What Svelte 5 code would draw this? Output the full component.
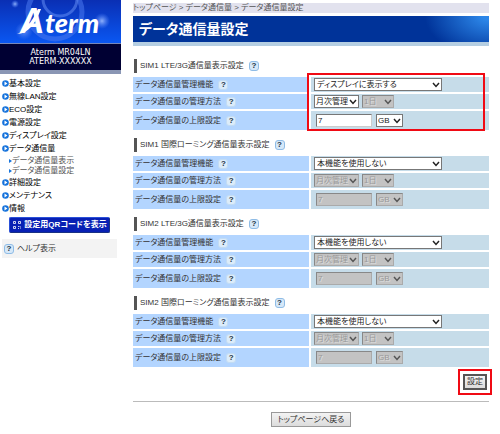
<script>
    const menu = [
        { label: '基本設定' },
        { label: '無線LAN設定' },
        { label: 'ECO設定' },
        { label: '電源設定' },
        { label: 'ディスプレイ設定' },
        { label: 'データ通信量', children: ['データ通信量表示', 'データ通信量設定'] },
        { label: '詳細設定' },
        { label: 'メンテナンス' },
        { label: '情報' }
    ];

    const modes = ['本機能を使用しない', 'ディスプレイに表示する'];

    let sections = [
        { id: 'sim1', title: 'SIM1 LTE/3G通信量表示設定', mode: modes[1], limit: '7' },
        { id: 'sim1r', title: 'SIM1 国際ローミング通信量表示設定', mode: modes[0], limit: '7' },
        { id: 'sim2', title: 'SIM2 LTE/3G通信量表示設定', mode: modes[0], limit: '7' },
        { id: 'sim2r', title: 'SIM2 国際ローミング通信量表示設定', mode: modes[0], limit: '7' }
    ];
</script>

{#snippet arrow()}
    <svg class="arrow" viewBox="0 0 8 6" aria-hidden="true"><path d="M1 1 L4 4.4 L7 1" /></svg>
{/snippet}

<div class="page">
    <aside>
        <div class="logo">
            <svg viewBox="0 0 121 43" preserveAspectRatio="xMidYMid slice" role="img" aria-label="Aterm">
                <defs>
                    <linearGradient id="sky" x1="0" y1="0" x2="0" y2="1">
                        <stop offset="0" stop-color="#0a2fb4" />
                        <stop offset="1" stop-color="#0a57f2" />
                    </linearGradient>
                    <radialGradient id="glow">
                        <stop offset="0" stop-color="#9dbcff" stop-opacity="0.9" />
                        <stop offset="1" stop-color="#5b8cff" stop-opacity="0" />
                    </radialGradient>
                </defs>
                <rect width="121" height="43" fill="url(#sky)" />
                <circle cx="55" cy="12" r="27" fill="none" stroke="#4a78ee" stroke-width="5" opacity="0.55" />
                <circle cx="60" cy="-1" r="17" fill="none" stroke="#5c86ee" stroke-width="3" opacity="0.6" />
                <circle cx="15" cy="4" r="4" fill="url(#glow)" />
                <circle cx="102" cy="21" r="8" fill="url(#glow)" />
                <circle cx="24" cy="31" r="9" fill="url(#glow)" opacity="0.7" />
                <path d="M17 34 C25 32 32 21 38 9 L41 9 C36 23 28 34 17 34 Z" fill="#fff" />
                <text x="21" y="33" class="big">A</text>
                <text x="45" y="33" class="word">term</text>
            </svg>
        </div>
        <div class="model">Aterm MR04LN<br />ATERM-XXXXXX</div>
        <nav>
            <ul>
                {#each menu as item}
                    <li>
                        <a href="#menu">
                            <svg class="bullet" viewBox="0 0 7 7" aria-hidden="true">
                                <circle cx="3.5" cy="3.5" r="3.3" fill="#1673dc" />
                                <path d="M2.5 1.5 L5.4 3.5 L2.5 5.5 Z" fill="#fff" />
                            </svg>{item.label}
                        </a>
                        {#if item.children}
                            <ul class="sub">
                                {#each item.children as child}
                                    <li>
                                        <a href="#sub">
                                            <svg class="tick" viewBox="0 0 3 4" aria-hidden="true"><path d="M0 0 L3 2 L0 4 Z" fill="#1673dc" /></svg>{child}
                                        </a>
                                    </li>
                                {/each}
                            </ul>
                        {/if}
                    </li>
                {/each}
            </ul>
        </nav>
        <button class="qr">
            <svg viewBox="0 0 10 10" aria-hidden="true">
                <path d="M1.5 1.5 h2 v2 h-2 z M6.5 1.5 h2 v2 h-2 z M1.5 6.5 h2 v2 h-2 z M6 6 l1 1 M8 6 v1 M6 8.5 h1 M8 8 h1" />
            </svg>設定用QRコードを表示
        </button>
        <a class="helpbar" href="#help"><span class="help">?</span>ヘルプ表示</a>
    </aside>

    <main>
        <div class="crumbs">トップページ &gt; データ通信量 &gt; データ通信量設定</div>
        <h1>データ通信量設定</h1>

        {#each sections as s, i}
            <section>
                <h2>{s.title}<a class="help" href="#help">?</a></h2>
                <div class="grid">
                    <table>
                        <tbody>
                            <tr>
                                <th scope="row"><label for="{s.id}-mode">データ通信量管理機能</label><a class="help" href="#help">?</a></th>
                                <td>
                                    <span class="select wide">
                                        <select id="{s.id}-mode" bind:value={s.mode}>
                                            {#each modes as m}<option>{m}</option>{/each}
                                        </select>
                                        {@render arrow()}
                                    </span>
                                </td>
                            </tr>
                            <tr>
                                <th scope="row"><label for="{s.id}-cycle">データ通信量の管理方法</label><a class="help" href="#help">?</a></th>
                                <td>
                                    <span class="select cycle">
                                        <select id="{s.id}-cycle" disabled={s.mode === modes[0]}>
                                            <option>月次管理</option>
                                        </select>
                                        {@render arrow()}
                                    </span>
                                    <span class="select day">
                                        <select aria-label="開始日" disabled>
                                            <option>1日</option>
                                        </select>
                                        {@render arrow()}
                                    </span>
                                </td>
                            </tr>
                            <tr class="tall">
                                <th scope="row"><label for="{s.id}-limit">データ通信量の上限設定</label><a class="help" href="#help">?</a></th>
                                <td>
                                    <input id="{s.id}-limit" type="text" bind:value={s.limit} disabled={s.mode === modes[0]} />
                                    <span class="select unit">
                                        <select aria-label="単位" disabled={s.mode === modes[0]}>
                                            <option>GB</option>
                                        </select>
                                        {@render arrow()}
                                    </span>
                                </td>
                            </tr>
                        </tbody>
                    </table>
                    {#if i === 0}
                        <div class="mark"></div>
                    {/if}
                </div>
            </section>
        {/each}

        <div class="actions">
            <div class="frame"><button class="apply">設定</button></div>
        </div>
        <hr />
        <div class="back"><button>トップページへ戻る</button></div>
    </main>
</div>

<style>
    :global(body) {
        background: #fff;
    }
    .page, button, select, input {
        font-family: "Liberation Sans", "Noto Sans CJK JP", sans-serif;
        font-size: 8px;
        font-feature-settings: "palt";
        color: #333;
    }
    .page {
        display: flex;
        align-items: flex-start;
        line-height: 10px;
    }
    .page :global(*) {
        box-sizing: border-box;
    }
    a {
        color: inherit;
        text-decoration: none;
    }
    ul {
        list-style: none;
        margin: 0;
        padding: 0;
    }
    aside {
        width: 121px;
        flex: none;
    }
    .logo svg {
        display: block;
        width: 100%;
    }
    .logo text {
        fill: #fff;
        font-family: Lato, sans-serif;
        font-style: italic;
        font-weight: 900;
    }
    .logo .big {
        font-size: 34px;
    }
    .logo .word {
        font-size: 27px;
    }
    .model {
        padding: 4px 0;
        border-top: 1px solid #7788bb;
        border-bottom: 4px solid #8a96b4;
        background: #000033;
        color: #fff;
        font-family: "DejaVu Sans", sans-serif;
        line-height: 9px;
        text-align: center;
    }
    nav {
        padding: 3px 0 0 2px;
        color: #000;
    }
    nav a {
        display: flex;
        align-items: center;
        height: 13px;
    }
    .bullet {
        width: 7px;
        height: 7px;
        flex: none;
    }
    .sub {
        padding: 1px 0 0 7px;
        color: #555;
    }
    .sub a {
        height: 10px;
    }
    .tick {
        width: 3px;
        height: 4px;
    }
    .qr {
        display: flex;
        align-items: center;
        justify-content: center;
        gap: 2px;
        width: 101px;
        height: 16px;
        margin: 2px 0 0 9px;
        padding: 0;
        border: 1px outset #2a50d8;
        border-radius: 2px;
        background: #0820b4;
        color: #fff;
        font-weight: bold;
    }
    .qr svg {
        width: 10px;
        height: 10px;
        fill: none;
        stroke: #fff;
        stroke-width: 0.8;
    }
    .helpbar {
        display: flex;
        align-items: center;
        gap: 3px;
        height: 19px;
        margin: 6px 4px 0 2px;
        padding-left: 2px;
        background: #f3f3f3;
    }
    .helpbar .help {
        margin-left: 0;
    }
    .help {
        display: inline-block;
        width: 10px;
        height: 10px;
        margin-left: 5px;
        border: 1px solid #8fbce6;
        border-radius: 3px;
        background: #d6e8f8;
        color: #234;
        font-weight: bold;
        line-height: 8px;
        text-align: center;
    }
    main {
        flex: 1;
        min-width: 0;
        padding: 3px 11px 8px 12px;
    }
    .crumbs {
        height: 10px;
        background: #e2e2ee;
        color: #555;
    }
    h1 {
        margin: 3px 0 13px;
        padding: 0 6px;
        border-bottom: 4px solid #b5cee2;
        background: radial-gradient(ellipse 64px 40px at 100% 0, #2c86e8 10%, #003399 100%) #003399;
        color: #fff;
        font-size: 14px;
        line-height: 26px;
    }
    section {
        margin-bottom: 5px;
    }
    h2 {
        display: flex;
        align-items: center;
        height: 14px;
        margin: 0 0 4px 1px;
        padding-left: 3px;
        border-left: 3px solid #555;
        font-size: 8px;
        font-weight: normal;
    }
    .grid {
        position: relative;
    }
    section + section {
        margin-top: 6px;
    }
    table {
        width: 100%;
        border-collapse: separate;
        border-spacing: 0;
        table-layout: fixed;
    }
    th, td {
        height: 17px;
        padding: 0 2px;
        border-bottom: 2px solid #fff;
        vertical-align: middle;
        line-height: 10px;
    }
    th {
        border-right: 2px solid #fff;
        background: #b3d5ff;
        font-weight: normal;
        text-align: left;
    }
    th .help {
        border-color: #c2dcf4;
        background: #dcecfa;
        vertical-align: top;
    }
    td {
        padding-left: 3px;
        background: #c6dce9;
        font-size: 0;
    }
    .tall th, .tall td {
        height: 21px;
    }
    .tall td {
        padding-left: 5px;
    }
    .mark {
        position: absolute;
        top: -4px;
        right: 4px;
        width: 50%;
        height: 58px;
        border: 2px solid #f00a14;
    }
    .select {
        display: inline-block;
        position: relative;
        height: 13px;
        vertical-align: middle;
    }
    .wide {
        width: 128px;
    }
    .cycle {
        width: 45px;
        margin-right: 3px;
    }
    .day {
        width: 32px;
    }
    .unit {
        width: 27px;
        margin-left: 4px;
    }
    select, input {
        display: block;
        width: 100%;
        height: 13px;
        margin: 0;
        padding: 0 1px;
        border: 1px solid #777;
        border-radius: 0;
        background: #fff;
        color: #222;
        line-height: 10px;
        appearance: none;
    }
    .wide select {
        padding-left: 2px;
    }
    input {
        display: inline-block;
        width: 56px;
        vertical-align: middle;
        border-color: #777 #ccc #ccc #777;
    }
    select:disabled, input:disabled {
        border-color: #888 #aaa #aaa #888;
        background: #c3c3c3;
        color: #999;
        opacity: 1;
        text-shadow: 1px 1px #ddd;
    }
    .arrow {
        position: absolute;
        top: 4px;
        right: 2px;
        width: 8px;
        height: 6px;
        fill: none;
        stroke: #222;
        stroke-width: 1.5;
        pointer-events: none;
    }
    select:disabled + .arrow {
        stroke: #555;
    }
    .actions {
        display: flex;
        justify-content: flex-end;
    }
    .frame {
        margin: -5px -3px 0 0;
        padding: 3px;
        border: 2px solid #f00a14;
    }
    button {
        padding: 0 3px;
        border: 1px solid #999;
        background: linear-gradient(#f3f3f3, #dcdcdc);
        line-height: 12px;
    }
    .apply {
        display: block;
        padding: 0 2px;
        border: 2px solid #555;
    }
    hr {
        margin: 6px 0 10px;
        border: 0;
        border-top: 1px solid #bbb;
    }
    .back {
        text-align: center;
    }
    .back button {
        width: 80px;
        height: 15px;
    }
</style>
